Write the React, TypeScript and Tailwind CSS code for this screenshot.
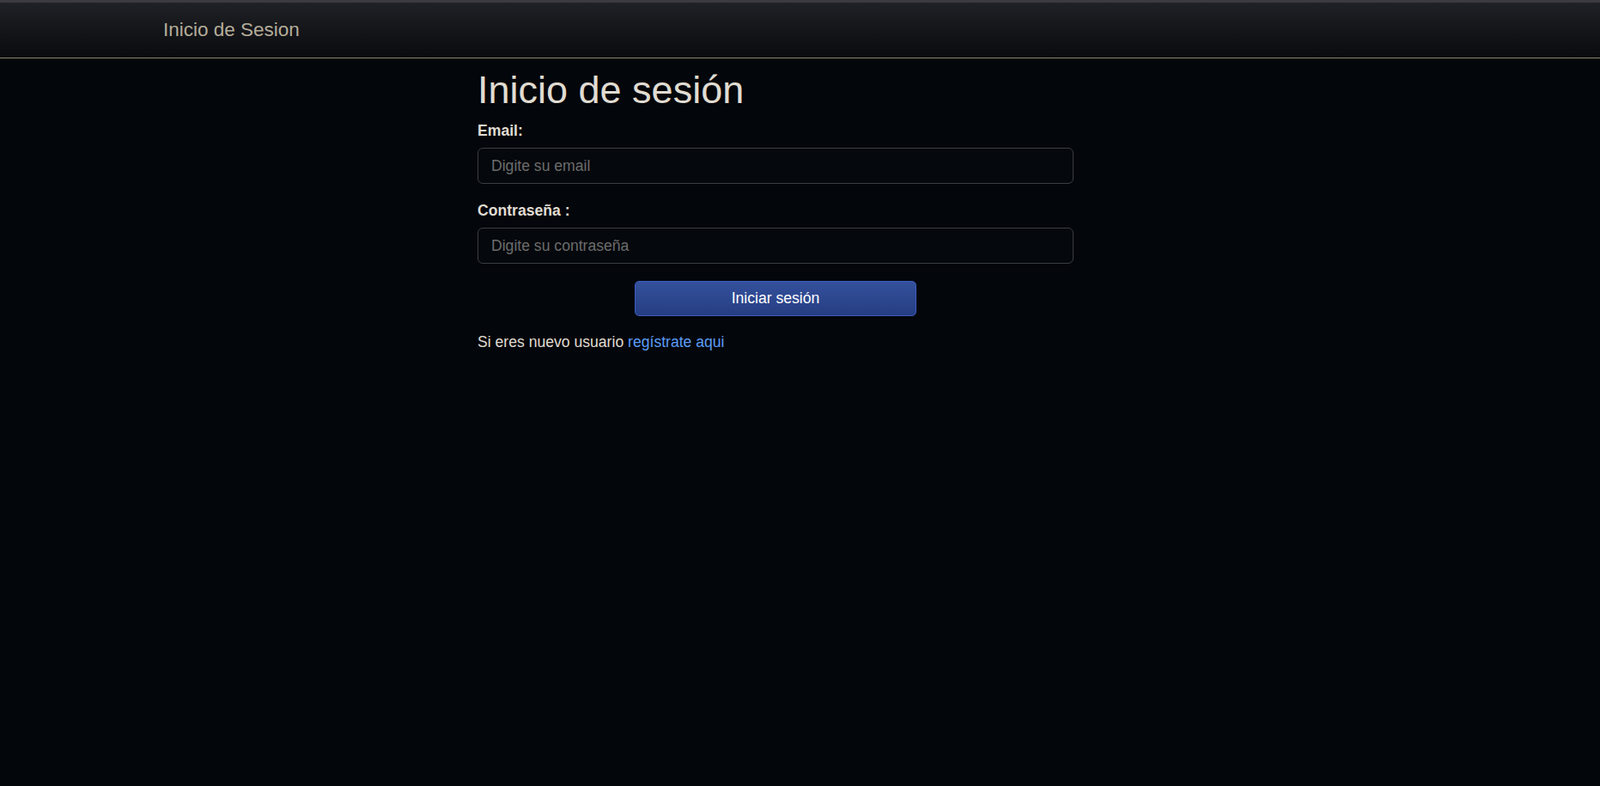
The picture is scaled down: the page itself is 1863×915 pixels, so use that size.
export default function App() {
  return (
    <main className="min-h-screen bg-[#03060a] font-['Liberation_Sans',Arial,sans-serif]">
      <div className="h-[3px] bg-[#3c3b41]" />
      <nav className="h-[65px] flex items-center pl-[190px] bg-gradient-to-b from-[#1f2126] to-[#0a0b0e] border-b border-[#8c8470]">
        <span className="text-[22.5px] leading-none text-[#b5ad9a]">Inicio de Sesion</span>
      </nav>
      <div className="ml-[556px] w-[694px] pt-[10px]">
        <h1 className="text-[45px] leading-[1.2] text-[#e0dcd2] mb-[7px]">Inicio de sesión</h1>
        <form onSubmit={(e) => e.preventDefault()}>
          <label className="block text-[17.6px] leading-[27px] font-bold text-[#e0dcd2] mb-[6px]">Email:</label>
          <input
            type="email"
            placeholder="Digite su email"
            className="block w-full h-[42px] px-[15px] text-[17.6px] bg-[#05080c] text-[#e0dcd2] placeholder:text-[#6c6c6c] border border-[#3a3e44] rounded-[6px] outline-none"
          />
          <label className="block mt-[18px] text-[17.6px] leading-[27px] font-bold text-[#e0dcd2] mb-[6px]">Contraseña :</label>
          <input
            type="password"
            placeholder="Digite su contraseña"
            className="block w-full h-[42px] px-[15px] text-[17.6px] bg-[#05080c] text-[#e0dcd2] placeholder:text-[#6c6c6c] border border-[#3a3e44] rounded-[6px] outline-none"
          />
          <div className="flex justify-center mt-[20px]">
            <button
              type="submit"
              className="w-[328px] h-[41px] text-[17.6px] text-white bg-gradient-to-b from-[#34519c] to-[#263d82] border border-[#3c5cc0] rounded-[5px]"
            >
              Iniciar sesión
            </button>
          </div>
          <p className="mt-[17px] text-[17.6px] leading-[27px] text-[#e0dcd2]">
            Si eres nuevo usuario <a href="#" className="text-[#5b9cf6]">regístrate aqui</a>
          </p>
        </form>
      </div>
    </main>
  );
}
